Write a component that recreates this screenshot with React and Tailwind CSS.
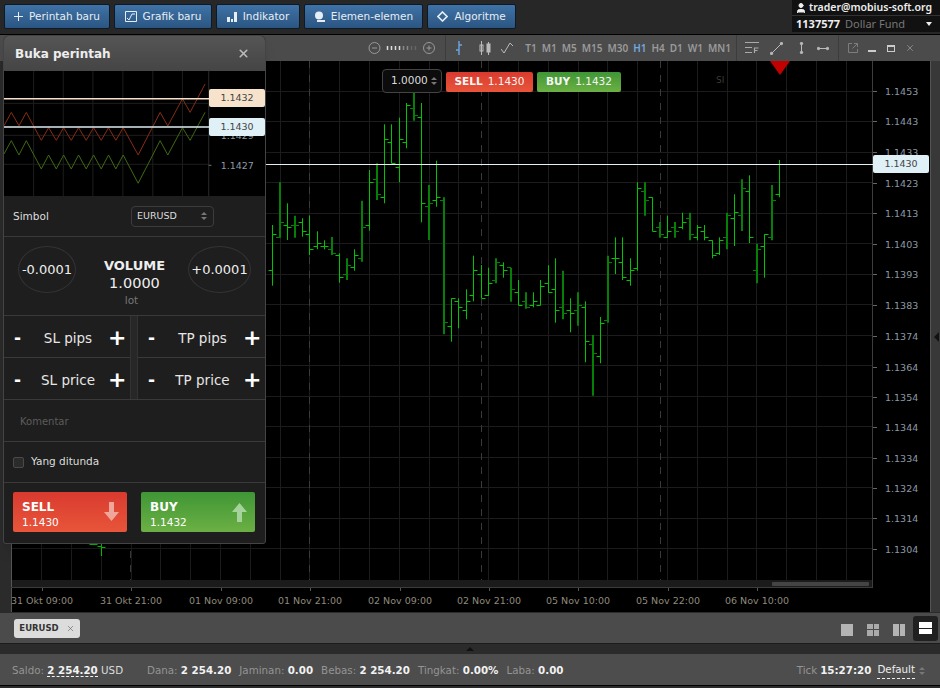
import { User, X } from "lucide-react";

const BARS = [
  [272.3, 225, 285.7, 270, 234.3], [279.7, 182.3, 237.7, 237.7, 222.3, 1], [287.3, 203.3, 240, 225, 227.7],
  [294.7, 215.7, 237.7, 225, 225, 1], [302, 218.3, 236.7, 222.3, 231.3], [309.3, 215.7, 255, 234.3, 249.3],
  [317, 231.3, 249.3, 246.3, 243.3], [324.3, 240.3, 249.3, 246.3, 246.3], [332, 237, 255, 249.3, 253.3, 1],
  [339.3, 253.3, 282.7, 255.7, 277.3], [346.7, 258.3, 280, 274.3, 265.3, 1], [354.3, 249.3, 270.7, 267.7, 255.7],
  [361.7, 200.7, 261.7, 258.3, 227.7, 1], [369.3, 170, 230.7, 225, 182.3], [376.7, 163.3, 200, 179.3, 194.3, 1],
  [384.3, 124.3, 203.3, 197.3, 139.3], [391.7, 124.3, 163.3, 142.3, 163.3], [399.3, 117.7, 182.3, 167.3, 139.3],
  [406.7, 103, 148.3, 142.3, 105.7], [414, 92, 120.7, 108.3, 115, 1], [421.3, 103, 222.3, 117.7, 203.3],
  [428.7, 185, 240, 206, 203.3, 1], [436.3, 160.7, 206.7, 200.7, 197.3], [443.7, 197.3, 334.3, 200.7, 322.7, 1],
  [451.3, 298.3, 341.7, 326.3, 298.3], [458.7, 298.3, 328.3, 301.3, 307.7], [466, 289.3, 319.3, 310.3, 301.3],
  [473.3, 255.7, 301.3, 295.7, 270.7], [481, 265, 298.3, 274.3, 298.3], [488.3, 267.7, 296, 295.7, 283.3],
  [495.7, 258.3, 283.3, 280, 262.3, 1], [503.3, 262.3, 277.7, 265.3, 270], [511, 267.7, 301.7, 267.7, 289.3, 1],
  [518.3, 280, 305.3, 292.3, 305.3], [525.7, 292.3, 308.7, 301.3, 307.7, 1], [533.3, 292.3, 307.3, 305.3, 301.3],
  [540.7, 280, 305.3, 305.3, 286.3], [548.3, 265.3, 292.7, 283.3, 292.3], [555.7, 258.3, 322.7, 289.3, 310.7],
  [563, 270.7, 319.3, 307.7, 313.3, 1], [570.3, 298.3, 332.3, 310.7, 313.3], [578, 292.3, 325.7, 310.7, 305.3, 1],
  [585.3, 301.3, 362.3, 307.7, 341.3], [593, 335, 395.7, 344.3, 353.3, 1], [600.3, 317, 363.3, 356.3, 323],
  [607.7, 255.7, 322.7, 320.3, 262.3, 1], [615.3, 237.3, 274, 258.3, 258.3], [622.7, 237.3, 280, 262.3, 277.3],
  [630, 258.3, 285.7, 280.3, 270.3], [637.3, 182.3, 270.7, 268.3, 188.3], [645, 182.3, 215.7, 191.3, 200.3, 1],
  [652.3, 197.3, 231.3, 197.3, 231.3], [659.7, 222, 237.7, 227.7, 234.3, 1], [667.3, 215.7, 237.7, 237.3, 231.3],
  [674.7, 222, 237.7, 227.7, 231.3, 1], [682.3, 212.7, 229.3, 227.7, 222], [689.7, 212.7, 240.3, 218.7, 234.3, 1],
  [697.3, 225, 240.3, 237.3, 227.7], [704.7, 225, 240.3, 231.3, 237.3], [712, 240.3, 258.3, 240.3, 255.7],
  [719.3, 237.3, 255, 253.3, 240.7], [727, 212.7, 249.3, 237.3, 215.7, 1], [734.3, 194.3, 246, 218.7, 212.7],
  [742, 179.3, 231, 215.7, 188.3, 1], [749.3, 175.3, 243, 191.3, 237.3], [757, 243.7, 283.3, 270.3, 249.3, 1],
  [764.3, 234.3, 277.7, 246.7, 234.3], [771.7, 185, 240.3, 237.3, 200.3, 1], [779.3, 160, 197.3, 194.3, null],
  [101, 530, 556, 546, 547], [93.5, 530, 545, 544, 544], [108.5, 530, 544, 543, 543],
];

const PRICES = [
  ["1.1453", 91], ["1.1443", 121], ["1.1433", 152], ["1.1423", 183], ["1.1413", 213], ["1.1403", 244],
  ["1.1393", 274], ["1.1383", 305], ["1.1374", 336], ["1.1364", 367], ["1.1354", 397], ["1.1344", 427],
  ["1.1334", 458], ["1.1324", 488], ["1.1314", 518], ["1.1304", 549],
];

const TIMES = [
  ["31 Okt 09:00", 42], ["31 Okt 21:00", 131], ["01 Nov 09:00", 221], ["01 Nov 21:00", 310], ["02 Nov 09:00", 400],
  ["02 Nov 21:00", 489], ["05 Nov 10:00", 578], ["05 Nov 22:00", 668], ["06 Nov 10:00", 757],
];

const TIMEFRAMES = ["T1", "M1", "M5", "M15", "M30", "H1", "H4", "D1", "W1", "MN1"];

const RED_LINE = "11,197 33,157 56,197 78,157 123,241 145,203 168,241 190,203 213,241 235,203 258,241 280,203 303,241 325,203 347,241 369,203 414,285 480,157 503,198 547,116 570,157 615,72";
const GREEN_LINE = "11,282 33,242 56,285 78,242 123,327 145,285 168,327 190,285 213,327 235,285 258,327 280,285 303,327 325,285 347,327 369,285 414,370 480,242 503,285 547,203 570,241 615,157";

function TopButton({ icon, label, width }) {
  return (
    <button className={`${width} h-[25px] flex items-center justify-center gap-1.5 rounded-[2px] border border-[#0c1a28] bg-gradient-to-b from-[#3f72a6] to-[#2b5682] text-[10.5px] text-[#e6edf4]`}>
      {icon}
      {label}
    </button>
  );
}

function Spinner() {
  return (
    <span className="flex flex-col gap-[2px]">
      <span className="w-0 h-0 border-x-[3px] border-x-transparent border-b-[3px] border-b-[#777]" />
      <span className="w-0 h-0 border-x-[3px] border-x-transparent border-t-[3px] border-t-[#777]" />
    </span>
  );
}

function Chart() {
  const gridX = [];
  for (let x = 41.7; x < 860; x += 29.8) gridX.push(Math.floor(x) + 0.5);
  const gridY = [60.5];
  for (let y = 91; y < 560; y += 30.52) gridY.push(Math.floor(y) + 0.5);
  return (
    <svg className="block w-[919px] h-[551px] bg-black" viewBox="11 61 919 551">
      {gridX.map((x) => (
        <line key={x} x1={x} x2={x} y1="61" y2="587" stroke="#1c1c1c" />
      ))}
      {gridY.map((y) => (
        <line key={y} x1="11" x2="872" y1={y} y2={y} stroke="#1c1c1c" />
      ))}
      {[130.5, 309.5, 481.5, 660.5].map((x) => (
        <line key={x} x1={x} x2={x} y1="61" y2="587" stroke="#3a3a3a" strokeDasharray="7 7" />
      ))}
      {BARS.map(([x, top, bot, l, r, dark]) => {
        const px = dark ? Math.round(x) : Math.floor(x) + 0.5;
        const col = dark ? "#067f06" : "#00c400";
        return (
          <g key={x} stroke={col}>
            <line x1={px} x2={px} y1={top} y2={bot} strokeWidth={dark ? 2 : 1} />
            <line x1={px - 4} x2={px} y1={Math.floor(l) + 0.5} y2={Math.floor(l) + 0.5} />
            {r !== null && <line x1={px} x2={px + 4} y1={Math.floor(r) + 0.5} y2={Math.floor(r) + 0.5} />}
          </g>
        );
      })}
      <rect x="12" y="580" width="860" height="7" fill="#1b1b1b" />
      <rect x="772" y="582" width="97" height="4" rx="1" fill="#444" />
      <line x1="11.5" x2="11.5" y1="61" y2="612" stroke="#555" />
      <line x1="11" x2="873" y1="587.5" y2="587.5" stroke="#3c3c3c" />
      <line x1="872.5" x2="872.5" y1="61" y2="588" stroke="#3c3c3c" />
      {PRICES.map(([p, y]) => (
        <g key={p}>
          <line x1="873" x2="877" y1={y + 0.5} y2={y + 0.5} stroke="#666" />
          <text x="885" y={y + 4} fontSize="9.5" fill="#8c9aa6">{p}</text>
        </g>
      ))}
      {TIMES.map(([t, x]) => (
        <g key={t}>
          <line x1={x + 0.5} x2={x + 0.5} y1="588" y2="591" stroke="#555" />
          <text x={x} y="604" fontSize="9.5" fill="#8f8a7c" textAnchor="middle">{t}</text>
        </g>
      ))}
      <line x1="265" x2="873" y1="164.5" y2="164.5" stroke="#e4f0f4" />
      <polygon points="770,61 790,61 780,75" fill="#c20000" />
      <text x="716" y="83" fontSize="9" fill="#3a3a3a">SI</text>
    </svg>
  );
}

function OrderPreview() {
  const xs = [100, 189, 278, 368, 458, 547];
  const ys = [130, 226, 313];
  return (
    <div className="relative h-[125px] shrink-0 bg-black">
      <svg className="block w-full h-full" viewBox="11 33 784 375">
        {xs.map((x) => (
          <line key={x} x1={x} x2={x} y1="33" y2="408" stroke="#1e1e1e" strokeWidth="3" />
        ))}
        {ys.map((y) => (
          <line key={y} x1="11" x2="627" y1={y} y2={y} stroke="#1e1e1e" strokeWidth="3" />
        ))}
        <line x1="626" x2="626" y1="33" y2="408" stroke="#2a2a2a" strokeWidth="3" />
        <polyline points={RED_LINE} fill="none" stroke="#8a2c16" strokeWidth="3" />
        <polyline points={GREEN_LINE} fill="none" stroke="#3f6a12" strokeWidth="3" />
        <line x1="11" x2="627" y1="116" y2="116" stroke="#f4e0cb" strokeWidth="4" />
        <line x1="11" x2="627" y1="201" y2="201" stroke="#dcecf1" strokeWidth="4" />
        <line x1="626" x2="634" y1="316" y2="316" stroke="#777" strokeWidth="3" />
        <text x="662" y="326" fontSize="28.5" fill="#8c9aa6">1.1427</text>
        <text x="662" y="238" fontSize="28.5" fill="#8c9aa6">1.1429</text>
      </svg>
      <div className="absolute left-[205px] top-[18px] w-[56px] h-[18px] rounded-[2px] bg-[#f7e3cc] flex items-center justify-center text-[9.5px] text-[#444]">1.1432</div>
      <div className="absolute left-[205px] top-[47px] w-[56px] h-[18px] rounded-[2px] bg-[#dff0f6] flex items-center justify-center text-[9.5px] text-[#444]">1.1430</div>
    </div>
  );
}

function StopCell({ label }) {
  return (
    <div className="flex-1 h-[42px] flex items-center justify-between pt-[3px] pl-[10px] pr-[4px] text-white">
      <span className="w-[14px] text-[17px] font-bold leading-none">-</span>
      <span className="text-[13.5px] text-[#e6e6e6]">{label}</span>
      <span className="w-[18px] text-center text-[22px] font-bold leading-none">+</span>
    </div>
  );
}

function OrderPanel() {
  return (
    <div className="absolute left-[3px] top-[35px] w-[263px] h-[509px] flex flex-col rounded-t-md rounded-b-[3px] border border-[#444] bg-[#1e1e1e] shadow-lg overflow-hidden">
      <div className="h-[35px] shrink-0 flex items-center justify-between pl-[11px] pr-[15px] bg-gradient-to-b from-[#555] to-[#454545]">
        <span className="text-[12px] font-bold text-[#eee]">Buka perintah</span>
        <X size={13} strokeWidth={3} className="text-[#bbb]" />
      </div>
      <OrderPreview />
      <div className="h-[41px] shrink-0 flex items-center pl-[9px] border-b border-[#3a3a3a]">
        <span className="w-[118px] pt-[2px] text-[10.5px] text-[#ddd]">Simbol</span>
        <div className="w-[83px] h-[21px] flex items-center justify-between pl-[5px] pr-[6px] rounded border border-[#3c3c3c] text-[9.5px] text-[#ddd]">
          EURUSD
          <Spinner />
        </div>
      </div>
      <div className="h-[79px] shrink-0 flex items-start justify-between pl-[14px] pr-[14px] pt-[9px] border-b border-[#3a3a3a]">
        <div className="w-[58px] h-[47px] rounded-[50%] border border-[#333] flex items-center justify-center text-[13px] text-[#eee]">-0.0001</div>
        <div className="flex flex-col items-center pl-[5px] text-[#eee]">
          <span className="mt-[11px] text-[13px] leading-[17px] font-bold">VOLUME</span>
          <span className="text-[14.5px] leading-[18px]">1.0000</span>
          <span className="-ml-[6px] text-[10.5px] leading-[16px] text-[#777]">lot</span>
        </div>
        <div className="w-[63px] h-[47px] rounded-[50%] border border-[#333] flex items-center justify-center text-[13px] text-[#eee]">+0.0001</div>
      </div>
      <div className="h-[84px] shrink-0 flex border-b border-[#3a3a3a]">
        <div className="w-[127px] flex flex-col divide-y divide-[#3a3a3a] border-r border-[#333]">
          <StopCell label="SL pips" />
          <StopCell label="SL price" />
        </div>
        <div className="w-[6px] bg-[#272727]" />
        <div className="flex-1 flex flex-col divide-y divide-[#3a3a3a] border-l border-[#333]">
          <StopCell label="TP pips" />
          <StopCell label="TP price" />
        </div>
      </div>
      <div className="h-[42px] shrink-0 flex items-center pl-[16px] pt-[1px] border-b border-[#3a3a3a] text-[10px] text-[#5c5c5c]">Komentar</div>
      <div className="h-[41px] shrink-0 flex items-center gap-[7px] pl-[9px] border-b border-[#3a3a3a] text-[10.5px] text-[#ddd]">
        <span className="w-[11px] h-[11px] rounded-[2px] border border-[#4a4a4a] bg-[#2b2b2b]" />
        Yang ditunda
      </div>
      <div className="flex gap-[14px] pl-[9px] pt-[9px]">
        <div className="w-[114px] h-[40px] flex items-center justify-between pl-[9px] pr-[8px] rounded-[2px] bg-gradient-to-b from-[#d93a2f] to-[#e8553a] text-white">
          <div className="flex flex-col pt-[6px]">
            <span className="text-[12px] leading-[15px] font-bold">SELL</span>
            <span className="text-[10.5px] leading-[15px]">1.1430</span>
          </div>
          <svg width="15" height="20" viewBox="0 0 15 20" fill="#f0a79b">
            <polygon points="5,0 10,0 10,10 15,10 7.5,19 0,10 5,10" />
          </svg>
        </div>
        <div className="w-[114px] h-[40px] flex items-center justify-between pl-[9px] pr-[8px] rounded-[2px] bg-gradient-to-b from-[#3f9636] to-[#6bb044] text-white">
          <div className="flex flex-col pt-[6px]">
            <span className="text-[12px] leading-[15px] font-bold">BUY</span>
            <span className="text-[10.5px] leading-[15px]">1.1432</span>
          </div>
          <svg width="15" height="20" viewBox="0 0 15 20" fill="#a5d39b">
            <polygon points="7.5,1 15,10 10,10 10,20 5,20 5,10 0,10" />
          </svg>
        </div>
      </div>
    </div>
  );
}

function Toolbar() {
  return (
    <div className="h-[26px] shrink-0 flex items-center justify-end bg-[#4b4b4b] text-[#a0a0a0]">
      <svg width="67" height="14" viewBox="0 0 67 14" fill="none" stroke="#999" className="mr-[10px]">
        <circle cx="6.5" cy="7" r="5.5" />
        <path d="M4 7h5" />
        <circle cx="61" cy="7" r="5.5" />
        <path d="M58.5 7h5M61 4.5v5" />
        <path d="M19.5 5v4M23.5 5v4M27.5 5v4M31.5 5v4" stroke="#ddd" strokeWidth="1.5" />
        <path d="M35.5 5v4M39.5 5v4" stroke="#888" strokeWidth="1.5" />
        <path d="M43.5 5v4M47.5 5v4" stroke="#666" strokeWidth="1.5" />
      </svg>
      <span className="w-px h-[26px] bg-[#3c3c3c] mr-[9px]" />
      <svg width="8" height="14" viewBox="0 0 8 14" fill="none" stroke="#6ba6e0" className="mr-[16px]">
        <path d="M4 0v14M1 9h3M4 4h3" strokeWidth="1.4" />
      </svg>
      <svg width="12" height="14" viewBox="0 0 12 14" fill="#bbb" stroke="#bbb" className="mr-[10px]">
        <path d="M2.5 0v14M9.5 1v13" fill="none" />
        <rect x="1" y="4" width="3" height="6" fill="none" />
        <rect x="8" y="3" width="3" height="8" />
      </svg>
      <svg width="12" height="12" viewBox="0 0 12 12" fill="none" stroke="#bbb" className="mr-[12px]">
        <path d="M0 7l3 4 6-10 3 3" />
      </svg>
      <div className="flex items-center gap-[5px] font-['Noto_Sans',sans-serif] text-[10px] font-semibold text-[#9a9a9a] mr-[5px]">
        {TIMEFRAMES.map((t) => (
          <span key={t} className={t === "H1" ? "text-[#74a9e0]" : ""}>{t}</span>
        ))}
      </div>
      <span className="w-px h-[26px] bg-[#3c3c3c] mr-[8px]" />
      <svg width="14" height="12" viewBox="0 0 14 12" fill="none" stroke="#aaa" className="mr-[11px]">
        <path d="M0 .5h14M0 5.5h7M0 10.5h7" />
        <path d="M9.5 11V6h4M9.5 8.5h3" strokeWidth="1.2" />
      </svg>
      <svg width="13" height="13" viewBox="0 0 13 13" fill="#bbb" stroke="#bbb" className="mr-[16px]">
        <path d="M1.5 11.5l10-10" />
        <circle cx="1.5" cy="11.5" r="1.2" />
        <circle cx="11.5" cy="1.5" r="1.2" />
      </svg>
      <svg width="5" height="12" viewBox="0 0 5 12" fill="#bbb" stroke="#bbb" className="mr-[13px]">
        <path d="M2.5 1v10" />
        <circle cx="2.5" cy="1.5" r="1.2" />
        <circle cx="2.5" cy="10.5" r="1.2" />
      </svg>
      <svg width="12" height="5" viewBox="0 0 12 5" fill="#bbb" stroke="#bbb" className="mr-[9px]">
        <path d="M1 2.5h10" />
        <circle cx="1.5" cy="2.5" r="1.2" />
        <circle cx="10.5" cy="2.5" r="1.2" />
      </svg>
      <span className="w-px h-[26px] bg-[#3c3c3c] mr-[9px]" />
      <svg width="10" height="10" viewBox="0 0 10 10" fill="none" stroke="#7d7d7d" className="mr-[10px]">
        <path d="M4 .5H.5v9h9V6M6 .5h3.5V4M9.5 .5l-5 5" />
      </svg>
      <span className="w-[8px] h-[2px] mt-[6px] bg-[#ccc] mr-[11px]" />
      <span className="w-[8px] h-[7px] border border-t-2 border-[#ccc] mr-[10px]" />
      <X size={10} strokeWidth={1.5} className="text-[#aaa] mr-[25px]" />
    </div>
  );
}

function Status({ label, value }) {
  return (
    <span className="text-[#949494]">
      {label}: <b className="text-[#f2f2f2]">{value}</b>
    </span>
  );
}

export default function App() {
  return (
    <div className="relative w-[940px] h-[688px] overflow-hidden flex flex-col bg-[#2b2b2b] font-['DejaVu_Sans',sans-serif]">
      <div className="h-[35px] shrink-0 flex justify-between items-start bg-[#272727] border-b border-black">
        <div className="flex gap-1 pl-1 pt-1">
          <TopButton
            width="w-[106px]"
            label="Perintah baru"
            icon={
              <svg width="9" height="9" viewBox="0 0 9 9" stroke="#e6edf4"><path d="M4.5 0v9M0 4.5h9" /></svg>
            }
          />
          <TopButton
            width="w-[98px]"
            label="Grafik baru"
            icon={
              <svg width="12" height="11" viewBox="0 0 12 11" fill="none" stroke="#e6edf4"><path d="M.5.5h11v10H.5zM2 7l2 2 3-6h3" /></svg>
            }
          />
          <TopButton
            width="w-[84px]"
            label="Indikator"
            icon={
              <svg width="10" height="10" viewBox="0 0 10 10" fill="#e6edf4"><path d="M0 5h3v5H0zM4 7h2v3H4zM7 0h3v10H7z" /></svg>
            }
          />
          <TopButton
            width="w-[119px]"
            label="Elemen-elemen"
            icon={
              <svg width="11" height="11" viewBox="0 0 11 11" fill="#e6edf4"><circle cx="5" cy="4.5" r="4" /><path d="M3 9h8v2H3z" /></svg>
            }
          />
          <TopButton
            width="w-[89px]"
            label="Algoritme"
            icon={
              <svg width="11" height="11" viewBox="0 0 11 11" fill="none" stroke="#e6edf4" strokeWidth="1.6"><path d="M5.5 1l4.5 4.5-4.5 4.5L1 5.5z" /></svg>
            }
          />
        </div>
        <div className="w-[148px] h-[32px] bg-[#111] font-['Noto_Sans',sans-serif] text-[11px] text-[#eee] whitespace-nowrap">
          <div className="h-[16px] flex items-center gap-[2px] pl-[3px] border-b border-[#333] text-[10.5px] font-semibold">
            <User size={12} fill="#eee" strokeWidth={2} />
            trader@mobius-soft.org
          </div>
          <div className="h-[16px] flex items-center pl-[4px] pr-[8px] gap-[5px]">
            <b>1137577</b>
            <span className="text-[#777]">Dollar Fund</span>
            <span className="ml-auto w-0 h-0 border-x-[3px] border-x-transparent border-t-[4px] border-t-[#eee]" />
          </div>
        </div>
      </div>
      <Toolbar />
      <div className="h-[551px] shrink-0 flex">
        <div className="w-[11px] bg-[#2b2b2b]" />
        <Chart />
        <div className="flex-1 flex items-center bg-[#383838] border-l border-[#555]">
          <span className="ml-[3px] w-0 h-0 border-y-[5px] border-y-transparent border-r-[5px] border-r-[#111]" />
        </div>
      </div>
      <div className="h-[31px] shrink-0 flex items-center justify-between pl-[14px] pr-[2px] mt-px bg-[#4b4b4b] border-b border-[#1c1c1c]">
        <div className="w-[66px] h-[19px] mt-[1px] flex items-center justify-center gap-[7px] rounded-[3px] bg-[#dcdcdc] text-[8.5px] font-bold text-[#333]">
          EURUSD
          <X size={9} strokeWidth={1.5} className="text-[#555]" />
        </div>
        <div className="flex items-center gap-[14px]">
          <span className="w-[12px] h-[12px] mt-[3px] bg-[#b4b4b4]" />
          <span className="w-[12px] h-[12px] mt-[3px] grid grid-cols-2 gap-px">
            <i className="bg-[#aaa]" /><i className="bg-[#aaa]" /><i className="bg-[#aaa]" /><i className="bg-[#aaa]" />
          </span>
          <span className="w-[12px] h-[12px] mt-[3px] grid grid-cols-2 gap-px">
            <i className="bg-[#b4b4b4]" /><i className="bg-[#b4b4b4]" />
          </span>
          <span className="w-[25px] h-[25px] -ml-[6px] flex items-center justify-center rounded-[3px] bg-[#202020]">
            <span className="w-[13px] h-[12px] flex flex-col gap-px">
              <i className="flex-1 bg-white" /><i className="flex-1 bg-white" />
            </span>
          </span>
        </div>
      </div>
      <div className="h-[10px] shrink-0 flex justify-center pt-[3px] bg-[#2b2b2b]">
        <span className="w-0 h-0 border-x-[4px] border-x-transparent border-b-[4px] border-b-[#111]" />
      </div>
      <div className="h-[32px] shrink-0 flex items-center pl-[12px] pr-[15px] pt-[2px] bg-[#4d4d4d] border-b border-black text-[10.3px] text-[#949494]">
        <span className="w-[135px]">
          Saldo: <b className="text-[#f2f2f2] border-b border-dashed border-[#f2f2f2]">2 254.20</b> <span className="text-[#ddd]">USD</span>
        </span>
        <div className="flex gap-[8px]">
          <Status label="Dana" value="2 254.20" />
          <Status label="Jaminan" value="0.00" />
          <Status label="Bebas" value="2 254.20" />
          <Status label="Tingkat" value="0.00%" />
          <Status label="Laba" value="0.00" />
        </div>
        <div className="ml-auto flex items-center gap-[3px]">
          <span>Tick</span>
          <b className="text-[#f2f2f2]">15:27:20</b>
          <span className="ml-[3px] mr-[1px] text-[#eee] border-b border-dashed border-[#eee]">Default</span>
          <Spinner />
        </div>
      </div>
      <OrderPanel />
      <div className="absolute left-[382px] top-[69px] flex items-center gap-[4px]">
        <div className="w-[60px] h-[24px] flex items-center justify-between pl-[8px] pr-[4px] rounded border border-[#444] bg-[#0c0c0c] text-[10.5px] text-[#ddd]">
          1.0000
          <Spinner />
        </div>
        <div className="w-[87px] h-[20px] mt-[1px] flex items-center justify-center gap-[5px] rounded-[2px] bg-gradient-to-b from-[#d93a2f] to-[#e8553a] text-[10.5px] text-[#f5f5f5]">
          <b>SELL</b> 1.1430
        </div>
        <div className="w-[84px] h-[20px] mt-[1px] flex items-center justify-center gap-[5px] rounded-[2px] bg-gradient-to-b from-[#3f9636] to-[#6bb044] text-[10.5px] text-[#f5f5f5]">
          <b>BUY</b> 1.1432
        </div>
      </div>
      <div className="absolute left-[873px] top-[155px] w-[56px] h-[18px] rounded-[2px] bg-[#dff0f6] flex items-center justify-center text-[9.5px] text-[#444]">1.1430</div>
    </div>
  );
}
